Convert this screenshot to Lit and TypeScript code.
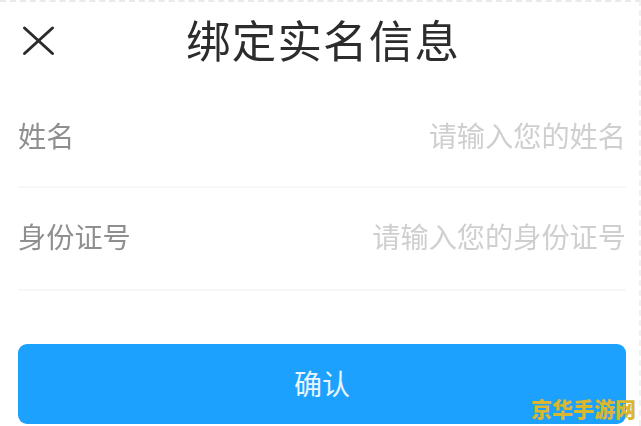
import { LitElement, html, css } from "lit";
import { customElement } from "lit/decorators.js";

@customElement("app-root")
export class AppRoot extends LitElement {
  static styles = css`
    :host {
      display: block;
      width: 641px;
      height: 426px;
      overflow: hidden;
      background: #fff;
      font-family: "Noto Sans CJK SC", "Liberation Sans", sans-serif;
    }
    .page {
      position: relative;
      box-sizing: border-box;
      width: 641px;
      height: 426px;
      border-top: 2px dashed #eaeaea;
      border-right: 2px dashed #f0f0f0;
      padding: 0 13px 0 18px;
      display: flex;
      flex-direction: column;
    }
    .header {
      height: 80px;
      display: flex;
      align-items: center;
      flex: none;
    }
    .close {
      display: block;
      width: 34px;
      height: 32px;
      margin-left: 4px;
      margin-top: -2px;
      flex: none;
    }
    .title {
      margin-left: 130px;
      margin-top: -6px;
      font-size: 44.5px;
      font-weight: 400;
      letter-spacing: 1.2px;
      line-height: 60px;
      color: #2c2c2c;
      white-space: nowrap;
      filter: blur(0.4px);
    }
    .row {
      height: 103px;
      box-sizing: border-box;
      border-bottom: 2px solid #f7f7f7;
      padding-bottom: 6px;
      display: flex;
      align-items: center;
      justify-content: space-between;
      font-size: 28.2px;
      flex: none;
    }
    .row.first {
      height: 106px;
      padding-bottom: 0;
    }
    .label {
      color: #8f8f8f;
      filter: blur(0.4px);
    }
    .hint {
      color: #cfcfcf;
      filter: blur(0.4px);
    }
    .btn {
      margin-top: 53px;
      height: 80px;
      box-sizing: border-box;
      padding-bottom: 3px;
      flex: none;
      border-radius: 9px;
      background: #1ca1fe;
      color: #e8f5ff;
      font-size: 28px;
      display: flex;
      align-items: center;
      justify-content: center;
    }
    .mark {
      position: absolute;
      right: 3px;
      bottom: 5px;
      font-size: 21px;
      line-height: 26px;
      font-weight: 900;
      color: #d9b72f;
      white-space: nowrap;
    }
  `;

  render() {
    return html`
      <div class="page">
        <div class="header">
          <svg class="close" viewBox="0 0 34 32" fill="none" stroke="#2b2b2b" stroke-width="3" stroke-linecap="round">
            <path d="M2.5 3 L30.5 28.5 M30.5 3 L2.5 28.5" />
          </svg>
          <div class="title">绑定实名信息</div>
        </div>
        <div class="row first">
          <span class="label">姓名</span>
          <span class="hint">请输入您的姓名</span>
        </div>
        <div class="row">
          <span class="label">身份证号</span>
          <span class="hint">请输入您的身份证号</span>
        </div>
        <div class="btn">确认</div>
        <div class="mark">京华手游网</div>
      </div>
    `;
  }
}
